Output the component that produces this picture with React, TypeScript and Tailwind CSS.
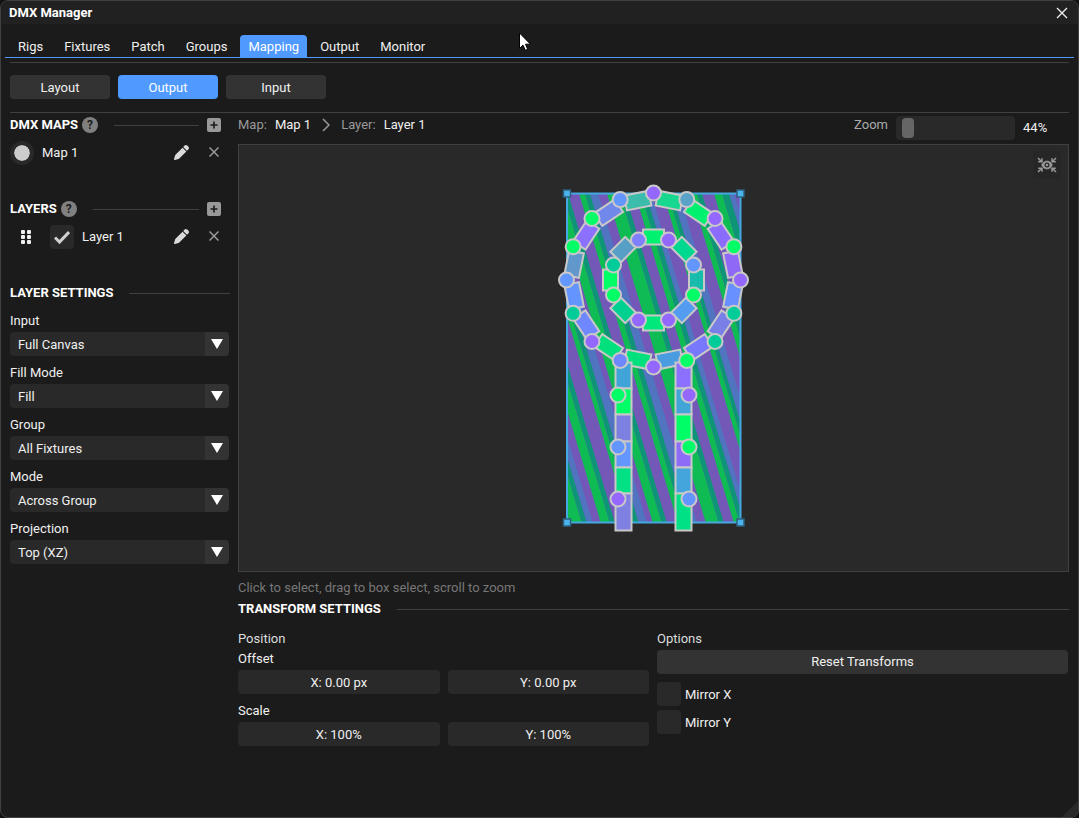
import { useState } from "react";
import { FaGripVertical, FaPen } from "react-icons/fa6";

const TABS = ["Rigs", "Fixtures", "Patch", "Groups", "Mapping", "Output", "Monitor"];
const VIEWS = ["Layout", "Output", "Input"];

const SETTINGS = [
  { id: "input", label: "Input", options: ["Full Canvas"] },
  { id: "fill-mode", label: "Fill Mode", options: ["Fill", "Fit"] },
  { id: "group", label: "Group", options: ["All Fixtures"] },
  { id: "mode", label: "Mode", options: ["Across Group"] },
  { id: "projection", label: "Projection", options: ["Top (XZ)"] },
];

const PURPLE = "#9468ff";
const BLUE = "#6496ff";
const GREEN = "#00ff66";
const TEAL = "#00cc99";

// Outer ring, clockwise from the top
const RING_DOTS = [
  PURPLE, "#5aa3c8", PURPLE, GREEN, PURPLE, TEAL, TEAL, GREEN,
  PURPLE, "#7088ff", PURPLE, TEAL, BLUE, GREEN, GREEN, BLUE,
];
const RING_BARS = [
  "#18d890", "#00f070", "#8c6cff", "#9068f8", "#6890ff", "#7880e8", "#7878ff", "#4a9ce0",
  "#00e07c", "#00e07c", "#7088ff", "#6494ff", "#6098cc", "#8c70ff", "#7088ea", "#3cbcaa",
];

// Inner ring, clockwise from the top
const INNER_BARS = ["#00f070", "#00d890", "#18bcac", "#549cf0", "#00e87c", "#00d090", GREEN, "#589fc6"];
const INNER_DOTS = [
  [15, -40, PURPLE], [40, -15, BLUE], [40, 15, GREEN], [15, 40, PURPLE],
  [-15, 40, PURPLE], [-40, 15, GREEN], [-40, -15, TEAL], [-15, -40, "#8080ff"],
] as const;

const COLUMN_Y = [363, 389, 415, 442, 468, 494, 531];
const COLUMNS = [
  { x: 615, bars: ["#40a4d8", GREEN, "#7c80e0", BLUE, "#00e084", "#7f80e2"], dotX: 618, dots: [GREEN, BLUE, PURPLE] },
  { x: 675, bars: ["#8c70ff", "#42a5d8", GREEN, "#8f6cf8", "#44a4dc", "#00e084"], dotX: 689, dots: [PURPLE, GREEN, BLUE] },
];

// [x at y = 380, green width, teal width, blue width]
const STRIPES = [
  [527, 12, 5, 6],
  [558, 9, 5, 0],
  [586, 5, 5, 8],
  [610, 9, 5, 0],
  [635, 6, 5, 8],
  [663, 13, 5, 0],
  [691, 6, 5, 5],
  [719, 5, 4, 7],
  [747, 6, 5, 0],
  [770, 8, 7, 5],
];

function Stripes() {
  return (
    <g clipPath="url(#map-area)">
      <rect x="567" y="193" width="174" height="330" fill="#7358b8" />
      {STRIPES.map(([x, green, teal, blue]) => (
        <g key={x} transform={`translate(${x} 380) skewX(16.7)`}>
          <rect x="0" y="-200" width={green} height="360" fill="#0fbc53" />
          <rect x={green} y="-200" width={teal} height="360" fill="#0e9577" />
          <rect x={green + teal} y="-200" width={blue} height="360" fill="#5074c0" />
        </g>
      ))}
    </g>
  );
}

function FixtureMap() {
  return (
    <svg className="block h-[360px] w-[201px]" viewBox="553 178 201 360" role="img" aria-label="Fixture map">
      <defs>
        <clipPath id="map-area">
          <rect x="567" y="193" width="174" height="330" />
        </clipPath>
      </defs>
      <Stripes />
      <rect x="567" y="193.500" width="173.500" height="329" fill="none" stroke="#45a8e0" strokeWidth="2" />
      <g fill="#4bb4ee" stroke="#2d607c" strokeWidth="1.500">
        {[[567, 193.5], [740.5, 193.5], [567, 522.5], [740.5, 522.5]].map(([x, y]) => (
          <rect key={`${x}-${y}`} x={x - 3.5} y={y - 3.5} width="7" height="7" />
        ))}
      </g>
      <g stroke="#c8c8c8" strokeWidth="2">
        {RING_BARS.map((fill, i) => (
          <rect key={i} x="-12.500" y="-7.500" width="25" height="15" fill={fill}
            transform={`translate(653.5 280) rotate(${11.25 + i * 22.5}) translate(0 -81)`} />
        ))}
        {INNER_BARS.map((fill, i) => (
          <rect key={i} x="-10.500" y="-7.500" width="21" height="15" fill={fill}
            transform={`translate(653.5 280) rotate(${i * 45}) translate(0 -43)`} />
        ))}
        {COLUMNS.map((column) =>
          column.bars.map((fill, i) => (
            <rect key={`${column.x}-${i}`} x={column.x + 0.5} y={COLUMN_Y[i] - 0.5} width="16"
              height={COLUMN_Y[i + 1] - COLUMN_Y[i]} fill={fill} />
          ))
        )}
        {RING_DOTS.map((fill, i) => {
          const angle = (i * Math.PI) / 8;
          return <circle key={i} cx={653.5 + 87 * Math.sin(angle)} cy={280 - 87 * Math.cos(angle)} r="7.500" fill={fill} />;
        })}
        {INNER_DOTS.map(([x, y, fill]) => (
          <circle key={`${x},${y}`} cx={653.5 + x} cy={280 + y} r="7.500" fill={fill} />
        ))}
        {COLUMNS.map((column) =>
          column.dots.map((fill, i) => (
            <circle key={`${column.x}-${i}`} cx={column.dotX} cy={395 + i * 52} r="7.500" fill={fill} />
          ))
        )}
      </g>
    </svg>
  );
}

function SectionHeader({ title, help, onAdd }: { title: string; help?: boolean; onAdd?: () => void }) {
  return (
    <div className="flex h-[22px] items-center">
      <h2 className="font-bold text-white">{title}</h2>
      {help && (
        <button type="button" aria-label={`About ${title}`}
          className="ml-1 flex size-4 items-center justify-center rounded-full bg-[#808080] text-[12px] leading-4 font-bold text-[#1b1b1b]">
          ?
        </button>
      )}
      <div className="ml-4 h-px flex-1 bg-[#404040]" />
      {onAdd && (
        <button type="button" aria-label={`Add to ${title}`} onClick={onAdd}
          className="mr-[9px] ml-2 flex size-[14px] items-center justify-center rounded-xs bg-[#999] text-[#1b1b1b]">
          <svg className="size-2" viewBox="0 0 8 8" fill="none" stroke="currentColor" strokeWidth="1.600">
            <path d="M4 .5v7M.5 4h7" />
          </svg>
        </button>
      )}
    </div>
  );
}

function RowActions({ name }: { name: string }) {
  return (
    <div className="mr-[11px] mb-[2px] ml-auto flex items-center gap-5">
      <button type="button" aria-label={`Rename ${name}`} className="text-[#dadada]">
        <FaPen className="size-[15px]" />
      </button>
      <button type="button" aria-label={`Delete ${name}`} className="text-[#999]">
        <svg className="size-[10px]" viewBox="0 0 10 10" fill="none" stroke="currentColor" strokeWidth="1.500">
          <path d="M.5.5l9 9M9.500.5l-9 9" />
        </svg>
      </button>
    </div>
  );
}

function SelectField({ id, label, options }: { id: string; label: string; options: string[] }) {
  return (
    <div className="pt-[7px]">
      <label htmlFor={id} className="mb-px block">{label}</label>
      <div className="relative mr-px">
        <select id={id} className="block h-6 w-full appearance-none rounded bg-[#292929] pt-px pr-6 pl-2 outline-none">
          {options.map((option) => <option key={option}>{option}</option>)}
        </select>
        <span className="pointer-events-none absolute inset-y-0 right-0 flex w-6 items-center justify-center rounded-r bg-[#333]">
          <svg className="h-[10px] w-3" viewBox="0 0 12 10" fill="#fff">
            <path d="M0 0h12L6 10z" />
          </svg>
        </span>
      </div>
    </div>
  );
}

function ValueField({ label, value }: { label: string; value: string }) {
  return (
    <input aria-label={label} defaultValue={value}
      className="h-6 w-full min-w-0 rounded bg-[#292929] text-center outline-none" />
  );
}

function CheckBox({ label }: { label: string }) {
  return (
    <label className="flex h-6 w-fit items-center gap-1">
      <input type="checkbox" className="size-6 appearance-none rounded bg-[#292929] checked:bg-[#4f99ff]" />
      <span className="pt-px">{label}</span>
    </label>
  );
}

function Crumb({ label, value }: { label: string; value: string }) {
  return (
    <span className="flex gap-2">
      <span className="text-[#999]">{label}</span>
      <span>{value}</span>
    </span>
  );
}

export default function App() {
  const [tab, setTab] = useState("Mapping");
  const [view, setView] = useState("Output");
  const [zoom, setZoom] = useState(44);

  return (
    <div className="min-h-screen bg-[#111] font-['Roboto','Liberation_Sans',sans-serif] text-[13px] leading-5 text-[#f0f0f0]">
      <div className="relative flex min-h-screen flex-col overflow-hidden rounded-lg border border-[#404040] bg-[#1b1b1b]">
        <header className="flex h-[23px] items-center justify-between bg-[#212121] pr-[10px] pl-2">
          <h1 className="font-bold text-white">DMX Manager</h1>
          <button type="button" aria-label="Close">
            <svg className="size-3" viewBox="0 0 12 12" fill="none" stroke="#f0f0f0" strokeWidth="1.300">
              <path d="M1 1l10 10M11 1L1 11" />
            </svg>
          </button>
        </header>

        <nav className="mx-1 mt-[11px] flex gap-[5px] border-b border-[#4f99ff] px-[5px]">
          {TABS.map((name) => (
            <button key={name} type="button" onClick={() => setTab(name)}
              className={`h-[22px] rounded-t px-2 pt-[2px] ${tab === name ? "bg-[#4f99ff] text-white" : ""}`}>
              {name}
            </button>
          ))}
        </nav>

        <div className="mx-[9px] mt-1 flex gap-2 border-y border-[#404040] pt-3 pb-[13px]">
          {VIEWS.map((name) => (
            <button key={name} type="button" onClick={() => setView(name)}
              className={`h-6 w-[100px] rounded pt-[2px] ${view === name ? "bg-[#4f99ff] text-white" : "bg-[#333]"}`}>
              {name}
            </button>
          ))}
        </div>

        <div className="mx-[9px] flex gap-2">
          <aside className="w-[220px] shrink-0 pt-px">
            <SectionHeader title="DMX MAPS" help onAdd={() => {}} />
            <div className="flex h-[34px] items-center">
              <label className="flex items-center gap-2">
                <input type="radio" name="map" defaultChecked
                  className="size-6 appearance-none rounded-full border-4 border-[#292929] bg-[#292929] bg-clip-padding checked:bg-[#ccc]" />
                Map 1
              </label>
              <RowActions name="Map 1" />
            </div>

            <div className="mt-7">
              <SectionHeader title="LAYERS" help onAdd={() => {}} />
              <div className="flex h-[34px] items-center">
                <FaGripVertical className="mx-2 size-4" />
                <label className="ml-2 flex items-center gap-2">
                  <span className="relative block size-6">
                    <input type="checkbox" defaultChecked className="peer block size-6 appearance-none rounded bg-[#292929]" />
                    <svg className="pointer-events-none absolute top-1 left-1 hidden size-4 peer-checked:block" viewBox="0 0 16 16"
                      fill="none" stroke="#d0d0d0" strokeWidth="3">
                      <path d="M1 8.500l4.500 4.500L15 3" />
                    </svg>
                  </span>
                  Layer 1
                </label>
                <RowActions name="Layer 1" />
              </div>
            </div>

            <div className="mt-7">
              <SectionHeader title="LAYER SETTINGS" />
              {SETTINGS.map((field) => <SelectField key={field.id} {...field} />)}
            </div>
          </aside>

          <main className="min-w-0 flex-1">
            <div className="flex items-start pb-1">
              <div className="flex h-6 items-center gap-[11px]">
                <Crumb label="Map:" value="Map 1" />
                <svg className="h-[14px] w-2" viewBox="0 0 8 14" fill="none" stroke="#999" strokeWidth="1.500">
                  <path d="M1 1l6 6-6 6" />
                </svg>
                <Crumb label="Layer:" value="Layer 1" />
              </div>
              <label htmlFor="zoom" className="mr-2 ml-auto leading-6 text-[#aaa]">Zoom</label>
              <input id="zoom" type="range" min={10} max={2000} value={zoom}
                onChange={(event) => setZoom(Number(event.target.value))}
                className="mt-[3px] h-6 w-[119px] appearance-none rounded bg-[#292929] px-1 [&::-webkit-slider-thumb]:h-5 [&::-webkit-slider-thumb]:w-3 [&::-webkit-slider-thumb]:appearance-none [&::-webkit-slider-thumb]:rounded [&::-webkit-slider-thumb]:bg-[#666]" />
              <output htmlFor="zoom" className="mt-[3px] ml-2 w-[46px] leading-6">{zoom}%</output>
            </div>

            <div className="relative flex justify-center border border-[#404040] bg-[#292929] py-[33px]">
              <FixtureMap />
              <button type="button" aria-label="Fit to view"
                className="absolute top-[6px] right-[7px] flex size-7 items-center justify-center rounded bg-[#262626] text-[#999]">
                <svg className="h-4 w-5" viewBox="0 0 20 16" fill="none" stroke="currentColor" strokeWidth="1.500">
                  <path d="M1 1l3.500 3.500M5 1.200V4.800H1.200M19 1l-3.500 3.500M15 1.200V4.800h3.800M1 15l3.500-3.500M5 14.800v-3.600H1.200M19 15l-3.500-3.500M15 14.800v-3.600h3.800" />
                  <path d="M4 8C6.500 2 13.500 2 16 8 13.500 14 6.500 14 4 8z" fill="currentColor" stroke="#262626" strokeWidth=".5" />
                  <circle cx="10" cy="8" r="1.900" fill="currentColor" stroke="#262626" strokeWidth="1.200" />
                </svg>
              </button>
            </div>

            <p className="mt-[6px] text-[#777]">Click to select, drag to box select, scroll to zoom</p>
            <SectionHeader title="TRANSFORM SETTINGS" />

            <div className="mt-[9px] grid grid-cols-2 gap-2 pr-px">
              <div>
                <h3 className="text-[#ddd]">Position</h3>
                <h3>Offset</h3>
                <div className="mt-px flex gap-2">
                  <ValueField label="Offset X" value="X: 0.00 px" />
                  <ValueField label="Offset Y" value="Y: 0.00 px" />
                </div>
                <h3 className="mt-[7px]">Scale</h3>
                <div className="mt-px flex gap-2">
                  <ValueField label="Scale X" value="X: 100%" />
                  <ValueField label="Scale Y" value="Y: 100%" />
                </div>
              </div>
              <div>
                <h3 className="text-[#ddd]">Options</h3>
                <button type="button" className="mt-px mb-2 h-6 w-full rounded bg-[#333]">Reset Transforms</button>
                <div className="flex flex-col gap-1">
                  <CheckBox label="Mirror X" />
                  <CheckBox label="Mirror Y" />
                </div>
              </div>
            </div>
          </main>
        </div>

        {/* Resize grip */}
        <svg className="pointer-events-none absolute right-0 bottom-0 size-4" viewBox="0 0 16 16" fill="#292929">
          <path d="M16 0v16H0z" />
        </svg>
        {/* Pointer */}
        <svg className="pointer-events-none absolute top-[31px] left-[518px] h-[19px] w-[13px]" viewBox="0 0 13 19" fill="#fff" stroke="#000">
          <path d="M.5 1v15.500l3.500-3.400 2.300 5.200 2.400-1-2.200-5.100h5z" />
        </svg>
      </div>
    </div>
  );
}
